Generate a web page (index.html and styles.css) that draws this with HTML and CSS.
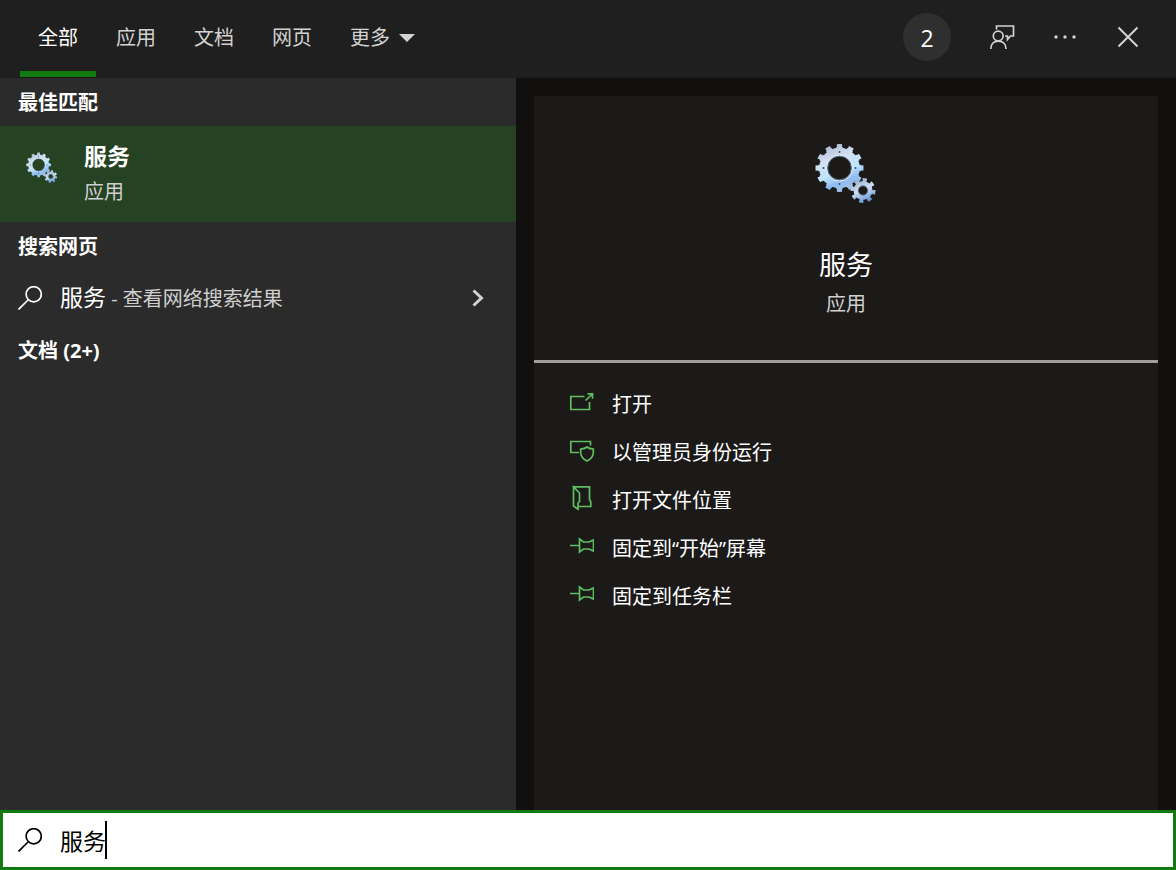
FILE: index.html
```html
<!DOCTYPE html>
<html lang="zh-CN">
<head>
<meta charset="utf-8">
<meta name="viewport" content="width=device-width, initial-scale=1">
<title>搜索</title>
<link rel="stylesheet" href="styles.css">
</head>
<body>
<svg class="defs" aria-hidden="true">
  <defs>
    <linearGradient id="steel" gradientUnits="userSpaceOnUse" x1="12" y1="2" x2="30" y2="48">
      <stop offset="0" stop-color="#a9b9d6"/>
      <stop offset="0.3" stop-color="#d3dff1"/>
      <stop offset="0.6" stop-color="#bfe6fb"/>
      <stop offset="0.8" stop-color="#8fbdf0"/>
      <stop offset="1" stop-color="#a3c0e6"/>
    </linearGradient>
    <linearGradient id="steel-small" gradientUnits="userSpaceOnUse" x1="42" y1="35" x2="52" y2="59">
      <stop offset="0" stop-color="#93a9ca"/>
      <stop offset="0.5" stop-color="#cfe0f3"/>
      <stop offset="1" stop-color="#5f92d2"/>
    </linearGradient>
    <symbol id="gears" viewBox="0 0 62 62">
      <g fill="none">
        <circle cx="24.500" cy="25" r="22" stroke="url(#steel)" stroke-width="4" pathLength="240" stroke-dasharray="9 11" stroke-dashoffset="4.500"/>
        <circle cx="24.500" cy="25" r="20" stroke="url(#steel)" stroke-width="3" pathLength="240" stroke-dasharray="12 8" stroke-dashoffset="6"/>
        <circle cx="24.500" cy="25" r="16.300" stroke="url(#steel)" stroke-width="8"/>
        <circle cx="24.500" cy="25" r="11.800" stroke="#60758f" stroke-width="1"/>
        <circle cx="24.500" cy="25" r="13" stroke="#e4eef8" stroke-width="1"/>
        <circle cx="48" cy="47.500" r="10.500" stroke="url(#steel-small)" stroke-width="4" pathLength="160" stroke-dasharray="10 10" stroke-dashoffset="1"/>
        <circle cx="48" cy="47.500" r="7" stroke="url(#steel-small)" stroke-width="5"/>
        <circle cx="48" cy="47.500" r="4.700" stroke="#5a6f8c" stroke-width="1"/>
      </g>
      <g fill="#3c5068">
        <circle cx="24.500" cy="9" r="1"/><circle cx="24.500" cy="41" r="1"/>
        <circle cx="8.500" cy="25" r="1"/><circle cx="40.500" cy="25" r="1"/>
      </g>
    </symbol>
    <symbol id="magnifier" viewBox="0 0 24 24">
      <path d="M10 14L.5 23.500"/><circle cx="15.700" cy="8.300" r="7.600"/>
    </symbol>
    <symbol id="pin" viewBox="0 0 24 24">
      <path d="M0 11.500H9.500M9.500 5L13.500 8H19L23.500 6V17L19 15H13.500L9.500 18Z"/>
    </symbol>
  </defs>
</svg>

<div class="search">
  <header class="topbar">
    <nav class="tabs" aria-label="筛选">
      <button class="tab tab-active" type="button">全部</button>
      <button class="tab" type="button">应用</button>
      <button class="tab" type="button">文档</button>
      <button class="tab" type="button">网页</button>
      <button class="tab" type="button">更多<svg class="caret-down" viewBox="0 0 16 8" aria-hidden="true"><path d="M0 0H16L8 8Z"/></svg></button>
    </nav>
    <div class="tools">
      <button class="tool points" type="button">2</button>
      <button class="tool" type="button" aria-label="反馈">
        <svg class="icon" viewBox="0 0 24 24"><path d="M6.500 4.500V1H23.500V11H20.500L17.500 14.500V11H15M.800 24C.800 19 4 16.200 8.300 16.200S16 19 16 24"/><circle cx="8.200" cy="11" r="4.900"/></svg>
      </button>
      <button class="tool" type="button" aria-label="选项">
        <svg class="icon icon-dots" viewBox="0 0 24 24"><circle cx="3" cy="12" r="1.700"/><circle cx="12" cy="12" r="1.700"/><circle cx="21" cy="12" r="1.700"/></svg>
      </button>
      <button class="tool" type="button" aria-label="关闭">
        <svg class="icon icon-close" viewBox="0 0 24 24"><path d="M2.500 2.500L21.500 21.500M21.500 2.500L2.500 21.500"/></svg>
      </button>
    </div>
  </header>

  <main class="content">
    <section class="results">
      <h2 class="group">最佳匹配</h2>
      <button class="best" type="button">
        <svg class="gears-small" aria-hidden="true"><use href="#gears"/></svg>
        <span class="best-text">
          <span class="best-name">服务</span>
          <span class="kind">应用</span>
        </span>
      </button>
      <h2 class="group">搜索网页</h2>
      <button class="web" type="button">
        <svg class="icon" aria-hidden="true"><use href="#magnifier"/></svg>
        <span class="web-text"><span class="web-term">服务</span> - 查看网络搜索结果</span>
        <svg class="chevron" viewBox="0 0 12 18" aria-hidden="true"><path d="M1.500 1.500L9.500 9L1.500 16.500"/></svg>
      </button>
      <h2 class="group">文档 (2+)</h2>
    </section>

    <section class="preview">
      <div class="card">
        <div class="hero">
          <svg class="gears-large" aria-hidden="true"><use href="#gears"/></svg>
          <h1 class="hero-name">服务</h1>
          <p class="kind">应用</p>
        </div>
        <div class="actions">
          <button class="action" type="button">
            <svg class="icon" viewBox="0 0 24 24" aria-hidden="true"><path d="M14.500 6.500H.800V19.500H19.500V12M15.500 10.500L22.500 3.800M17.500 3.800H22.500V8.800"/></svg>打开
          </button>
          <button class="action" type="button">
            <svg class="icon" viewBox="0 0 24 24" aria-hidden="true"><path d="M9 14.500H.800V3.500H20.500V7.500M17 9C18.500 10.200 20.500 11 23.300 11V14.500C23.300 18.500 21 21 17 23C13 21 10.700 18.500 10.700 14.500V11C13.500 11 15.500 10.200 17 9Z"/></svg>以管理员身份运行
          </button>
          <button class="action" type="button">
            <svg class="icon" viewBox="0 0 24 24" aria-hidden="true"><path d="M3.500 .800H19.500V13.500L20.800 16V20.500H8.500M3.500 .800L9.500 7V15.500L8 17V23.200L3.500 20Z"/></svg>打开文件位置
          </button>
          <button class="action" type="button">
            <svg class="icon" aria-hidden="true"><use href="#pin"/></svg>固定到“开始”屏幕
          </button>
          <button class="action" type="button">
            <svg class="icon" aria-hidden="true"><use href="#pin"/></svg>固定到任务栏
          </button>
        </div>
      </div>
    </section>
  </main>

  <label class="searchbox">
    <svg class="icon" aria-hidden="true"><use href="#magnifier"/></svg>
    <span class="field">
      <input class="query" type="text" value="服务" aria-label="搜索">
      <span class="text-caret"></span>
    </span>
  </label>
</div>
</body>
</html>
```
FILE: styles.css
```css
* {
  box-sizing: border-box;
}

body {
  margin: 0;
  background: #11100f;
  color: #fff;
  font-family: "Open Sans", "Noto Sans CJK SC", sans-serif;
  font-size: 20px;
  line-height: 28px;
}

button,
input {
  margin: 0;
  padding: 0;
  border: 0;
  background: none;
  color: inherit;
  font: inherit;
  text-align: left;
}

.defs {
  position: absolute;
  width: 0;
  height: 0;
}

.icon {
  flex: none;
  width: 24px;
  height: 24px;
  fill: none;
  stroke: currentColor;
  stroke-width: 1.7;
  overflow: visible;
}

.search {
  display: flex;
  flex-direction: column;
  min-height: 100vh;
}

.topbar {
  display: flex;
  justify-content: space-between;
  background: #1f1f1f;
  border-bottom: 1px solid #1b1b1b;
}

.tabs {
  display: flex;
  gap: 2px;
  padding-left: 20px;
}

.tab {
  display: flex;
  align-items: center;
  gap: 9px;
  height: 77px;
  padding: 5px 18px 0;
  border-bottom: 6px solid transparent;
  color: #d2d2d2;
}

.tab-active {
  border-bottom-color: #107c10;
  color: #fff;
}

.caret-down {
  width: 16px;
  height: 8px;
  fill: #d2d2d2;
}

.tools {
  display: flex;
  align-items: center;
  gap: 15px;
  padding: 0 24px 3px 0;
}

.tool {
  display: flex;
  align-items: center;
  justify-content: center;
  width: 48px;
  height: 48px;
  color: #d2d2d2;
}

.points {
  margin-right: 12px;
  padding-top: 2px;
  border-radius: 50%;
  background: #2f2f2f;
  color: #fff;
  font-size: 23px;
}

.icon-dots {
  fill: currentColor;
  stroke: none;
}

.icon-close {
  stroke-width: 2;
}

.content {
  flex: 1;
  display: grid;
  grid-template-columns: minmax(0, 516fr) minmax(0, 660fr);
}

.results {
  background: #2b2b2b;
}

.group {
  margin: 0;
  padding: 11px 18px 9px;
  font-size: 20px;
  font-weight: 700;
}

.best {
  display: flex;
  align-items: flex-start;
  gap: 26px;
  width: 100%;
  height: 96px;
  padding: 14px 26px;
  background: #254223;
}

.gears-small {
  width: 32px;
  height: 32px;
  margin-top: 12px;
}

.best-text {
  display: grid;
  gap: 6px;
}

.best-name {
  font-size: 23px;
  font-weight: 700;
  line-height: 32px;
}

.kind {
  margin: 0;
  color: #cfcfcf;
}

.web {
  display: flex;
  align-items: center;
  gap: 18px;
  width: 100%;
  height: 56px;
  padding: 0 32px 0 18px;
}

.web-text {
  flex: 1;
  color: #cfcfcf;
}

.web-term {
  color: #fff;
  font-size: 23px;
}

.chevron {
  width: 12px;
  height: 18px;
  fill: none;
  stroke: #d2d2d2;
  stroke-width: 3;
}

.preview {
  display: flex;
  padding: 18px 18px 0;
}

.card {
  flex: 1;
  background: #1b1a19;
}

.hero {
  display: flex;
  flex-direction: column;
  align-items: center;
  padding: 47px 0 42px;
  border-bottom: 3px solid #a19f9d;
}

.gears-large {
  width: 62px;
  height: 62px;
}

.hero-name {
  margin: 40px 0 5px;
  font-size: 27px;
  font-weight: 400;
  line-height: 40px;
}

.actions {
  padding: 17px 0;
}

.action {
  display: flex;
  align-items: center;
  gap: 18px;
  width: 100%;
  height: 48px;
  padding: 2px 36px 0;
}

.action .icon {
  height: 30px;
  padding-bottom: 6px;
  color: #5fbf60;
}

.searchbox {
  display: flex;
  align-items: center;
  gap: 18px;
  height: 60px;
  padding: 0 15px;
  border: 3px solid #107c10;
  background: #fff;
  color: #000;
}

.field {
  position: relative;
  flex: 1;
  font-size: 23px;
}

.query {
  display: block;
  width: 100%;
  height: 38px;
  outline: 0;
}

.text-caret {
  position: absolute;
  top: 0;
  left: 45px;
  width: 2px;
  height: 38px;
  background: #000;
}
```
